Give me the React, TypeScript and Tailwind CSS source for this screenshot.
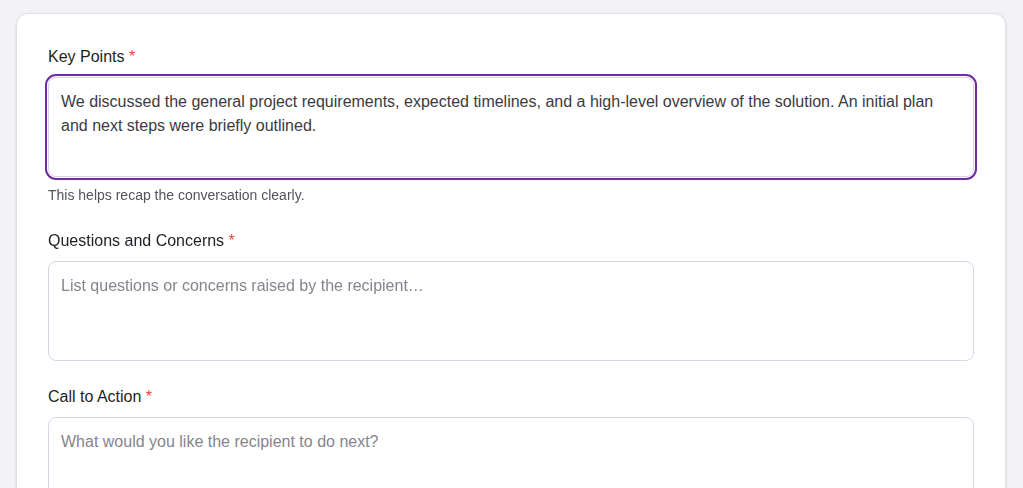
import { useEffect, useRef } from "react";

const fields = [
  {
    label: "Key Points",
    value:
      "We discussed the general project requirements, expected timelines, and a high-level overview of the solution. An initial plan and next steps were briefly outlined.",
    placeholder: "Summarize the main points discussed…",
    hint: "This helps recap the conversation clearly.",
    focused: true,
  },
  {
    label: "Questions and Concerns",
    value: "",
    placeholder: "List questions or concerns raised by the recipient…",
    hint: "",
    focused: false,
  },
  {
    label: "Call to Action",
    value: "",
    placeholder: "What would you like the recipient to do next?",
    hint: "",
    focused: false,
  },
];

export default function App() {
  const activeRef = useRef<HTMLTextAreaElement>(null);

  useEffect(() => {
    const el = activeRef.current;
    if (!el) return;
    el.focus();
    el.setSelectionRange(el.value.length, el.value.length);
  }, []);

  return (
    <div
      className="min-h-screen bg-[#f3f2f5] pt-[13px] pl-4 pr-[17px] pb-8"
      style={{ fontFamily: '"Liberation Sans", Arial, sans-serif' }}
    >
      <div className="rounded-xl border border-[#e3dfe8] bg-white px-[31px] pt-[31px] pb-8 shadow-sm">
        <div className="flex flex-col gap-6">
          {fields.map((f) => (
            <div key={f.label}>
              <label className="mb-2 block text-base leading-6 text-[#1f1e24]">
                {f.label} <span className="text-[#ef4444]">*</span>
              </label>
              <textarea
                ref={f.focused ? activeRef : undefined}
                defaultValue={f.value}
                placeholder={f.placeholder}
                className={`block h-[100px] w-full resize-none rounded-lg border border-[#ddd3e4] bg-white px-3 py-3 text-base leading-6 text-[#3b3a40] caret-[#111] placeholder:text-[#86848c] ${
                  f.focused
                    ? "outline-2 outline-offset-1 outline-[#6f2da0]"
                    : "outline-none"
                }`}
              />
              {f.hint && (
                <p className="mt-2 text-sm leading-5 text-[#55535b]">
                  {f.hint}
                </p>
              )}
            </div>
          ))}
        </div>
      </div>
    </div>
  );
}
